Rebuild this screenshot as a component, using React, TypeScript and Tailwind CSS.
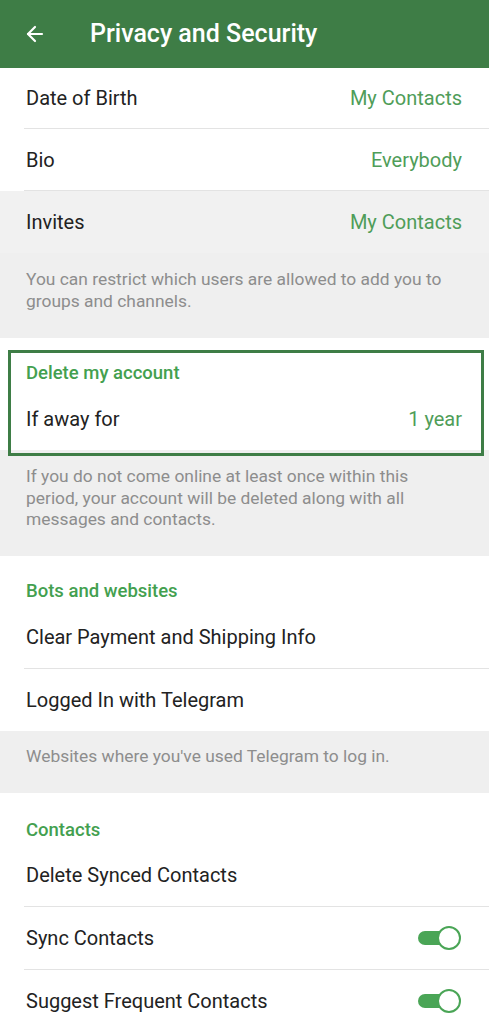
import { ArrowLeft } from "lucide-react";

function Row({
  label,
  value,
  divider,
  toggle,
  gray,
  h = "h-[62px]",
}: {
  label: string;
  value?: string;
  divider?: boolean;
  toggle?: boolean;
  gray?: boolean;
  h?: string;
}) {
  return (
    <div className={gray ? "bg-[#f1f1f1]" : "bg-white"}>
      <div className={`flex ${h} items-center justify-between pl-[26px] pr-[27px]`}>
        <span className="text-[20px] text-[#222222]">{label}</span>
        {value && <span className="text-[20px] text-[#4f9d59]">{value}</span>}
        {toggle && <Toggle />}
      </div>
      {divider && <div className="ml-[24px] h-px bg-[#e3e3e3]" />}
    </div>
  );
}

function Toggle() {
  return (
    <div className="relative mr-[1px] flex h-[24px] w-[43px] items-center">
      <div className="h-[14px] w-[37px] rounded-full bg-[#4aa556]" />
      <div className="absolute right-0 top-0 h-[24px] w-[24px] rounded-full border-[2.5px] border-[#4aa556] bg-white" />
    </div>
  );
}

function Info({ children, className }: { children: React.ReactNode; className: string }) {
  return (
    <div className={`bg-[#efefef] px-[26px] text-[17.4px] leading-[21.5px] text-[#8d8d8d] ${className}`}>
      {children}
    </div>
  );
}

function SectionTitle({ title, className }: { title: string; className: string }) {
  return (
    <div className={`px-[26px] text-[18.5px] font-medium leading-[22px] text-[#43a04f] ${className}`}>
      {title}
    </div>
  );
}

export default function App() {
  return (
    <div className="h-[1024px] w-[489px] overflow-hidden bg-white font-['Roboto',sans-serif]">
      <div className="flex h-[68px] items-center bg-[#3e7d46] pl-[23px]">
        <ArrowLeft size={24} strokeWidth={2.2} className="text-white" />
        <h1 className="ml-[43px] text-[25px] font-medium text-white">Privacy and Security</h1>
      </div>

      <Row label="Date of Birth" value="My Contacts" divider h="h-[60px]" />
      <Row label="Bio" value="Everybody" divider h="h-[61px]" />
      <Row label="Invites" value="My Contacts" gray />

      <Info className="h-[85px] pt-[16px] pr-[20px]">
        You can restrict which users are allowed to add you to groups and channels.
      </Info>

      <div className="relative bg-white">
        <SectionTitle title="Delete my account" className="h-[50px] pt-[24px]" />
        <div className="flex h-[62px] items-center justify-between pl-[26px] pr-[27px]">
          <span className="text-[20px] text-[#222222]">If away for</span>
          <span className="text-[20px] text-[#4f9d59]">1 year</span>
        </div>
        <div className="absolute left-[8px] right-[5px] top-[12px] h-[106px] border-[3px] border-[#3e7d46]" />
      </div>

      <Info className="h-[106px] pt-[16px] pr-[60px]">
        If you do not come online at least once within this period, your account will be deleted along with all messages and contacts.
      </Info>

      <SectionTitle title="Bots and websites" className="h-[50px] pt-[24px]" />
      <Row label="Clear Payment and Shipping Info" divider />
      <Row label="Logged In with Telegram" />

      <Info className="h-[62px] pt-[15px]">Websites where you've used Telegram to log in.</Info>

      <SectionTitle title="Contacts" className="h-[51px] pt-[26px]" />
      <Row label="Delete Synced Contacts" divider />
      <Row label="Sync Contacts" toggle divider />
      <Row label="Suggest Frequent Contacts" toggle />
    </div>
  );
}
